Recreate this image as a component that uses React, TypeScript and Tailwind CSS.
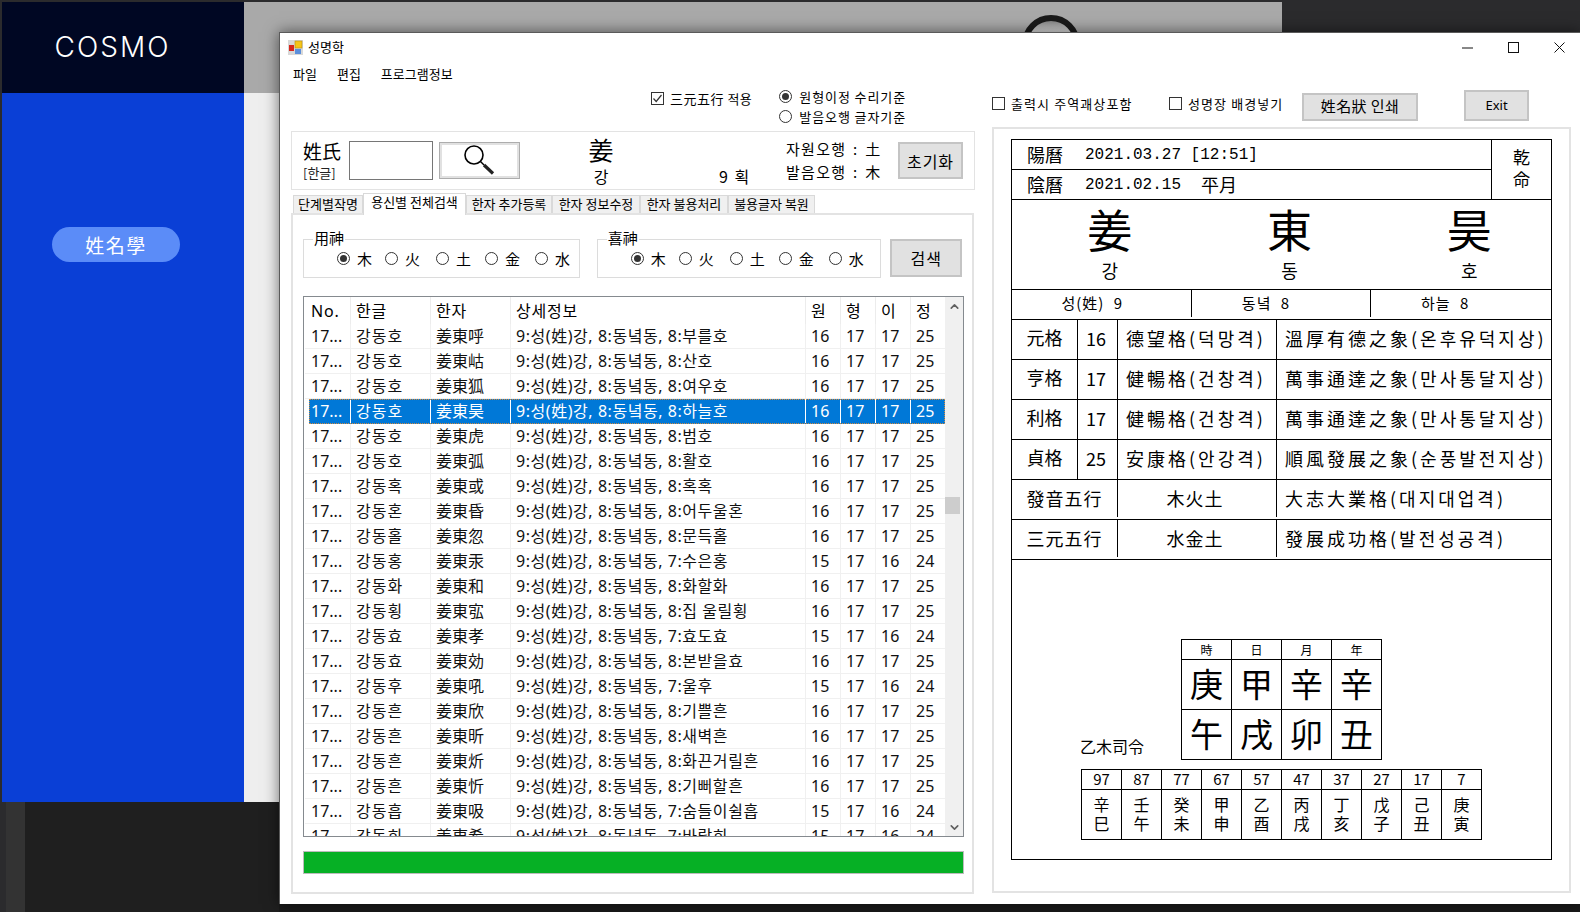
import { ChevronDown, ChevronUp } from "lucide-react";

const rows = [
  ["강동호", "姜東呼", "8:부를호", "16", "17", "17", "25"],
  ["강동호", "姜東岵", "8:산호", "16", "17", "17", "25"],
  ["강동호", "姜東狐", "8:여우호", "16", "17", "17", "25"],
  ["강동호", "姜東昊", "8:하늘호", "16", "17", "17", "25"],
  ["강동호", "姜東虎", "8:범호", "16", "17", "17", "25"],
  ["강동호", "姜東弧", "8:활호", "16", "17", "17", "25"],
  ["강동혹", "姜東或", "8:혹혹", "16", "17", "17", "25"],
  ["강동혼", "姜東昏", "8:어두울혼", "16", "17", "17", "25"],
  ["강동홀", "姜東忽", "8:문득홀", "16", "17", "17", "25"],
  ["강동홍", "姜東汞", "7:수은홍", "15", "17", "16", "24"],
  ["강동화", "姜東和", "8:화할화", "16", "17", "17", "25"],
  ["강동횡", "姜東宖", "8:집 울릴횡", "16", "17", "17", "25"],
  ["강동효", "姜東孝", "7:효도효", "15", "17", "16", "24"],
  ["강동효", "姜東効", "8:본받을효", "16", "17", "17", "25"],
  ["강동후", "姜東吼", "7:울후", "15", "17", "16", "24"],
  ["강동흔", "姜東欣", "8:기쁠흔", "16", "17", "17", "25"],
  ["강동흔", "姜東昕", "8:새벽흔", "16", "17", "17", "25"],
  ["강동흔", "姜東炘", "8:화끈거릴흔", "16", "17", "17", "25"],
  ["강동흔", "姜東忻", "8:기뻐할흔", "16", "17", "17", "25"],
  ["강동흡", "姜東吸", "7:숨들이쉴흡", "15", "17", "16", "24"],
  ["강동희", "姜東希", "7:바랄희", "15", "17", "16", "24"],
];

const tabs = [
  { label: "한자 추가등록", width: "w-[86px]" },
  { label: "한자 정보수정", width: "w-[88px]" },
  { label: "한자 불용처리", width: "w-[88px]" },
  { label: "불용글자 복원", width: "w-[87px]" },
];

const elements = [
  { label: "木", width: "w-[48px]" },
  { label: "火", width: "w-[51px]" },
  { label: "土", width: "w-[49px]" },
  { label: "金", width: "w-[50px]" },
  { label: "水", width: "w-[36px]" },
];

const fortune = [
  ["元格", "16", "德望格(덕망격)", "溫厚有德之象(온후유덕지상)"],
  ["亨格", "17", "健暢格(건창격)", "萬事通達之象(만사통달지상)"],
  ["利格", "17", "健暢格(건창격)", "萬事通達之象(만사통달지상)"],
  ["貞格", "25", "安康格(안강격)", "順風發展之象(순풍발전지상)"],
];

const daeun = [
  ["97", "辛", "巳"],
  ["87", "壬", "午"],
  ["77", "癸", "未"],
  ["67", "甲", "申"],
  ["57", "乙", "酉"],
  ["47", "丙", "戌"],
  ["37", "丁", "亥"],
  ["27", "戊", "子"],
  ["17", "己", "丑"],
  ["7", "庚", "寅"],
];

function Check({ checked, label }: { checked?: boolean; label: string }) {
  return (
    <div className="flex items-center gap-[6px] text-[13px] leading-none text-black">
      <span className="flex h-[13px] w-[13px] items-center justify-center border border-[#333]">
        {checked && (
          <svg width="11" height="11" viewBox="0 0 11 11" fill="none">
            <path d="M1.5 5.5 4.2 8.5 9.5 2" stroke="#333" strokeWidth="1.2" />
          </svg>
        )}
      </span>
      <span>{label}</span>
    </div>
  );
}

function Radio({ checked }: { checked?: boolean }) {
  return (
    <span className="flex h-[13px] w-[13px] shrink-0 items-center justify-center rounded-full border border-[#333]">
      {checked && <span className="h-[7px] w-[7px] rounded-full bg-[#333]" />}
    </span>
  );
}

function WinButton({ className, children }: { className: string; children: React.ReactNode }) {
  return (
    <button className={`flex items-center justify-center border-2 border-[#c4c4c4] bg-[#e1e1e1] text-black ${className}`}>
      {children}
    </button>
  );
}

function ElementGroup({ title, className }: { title: string; className: string }) {
  return (
    <div className={`relative flex h-[39px] items-center border border-[#dcdcdc] ${className}`}>
      <span className="absolute top-[-12px] left-[9px] bg-white px-[1px] text-[15px] leading-[20px]">{title}</span>
      {elements.map((el, i) => (
        <div key={el.label} className={`flex items-center gap-[7px] text-[15px] leading-none ${el.width}`}>
          <Radio checked={i === 0} />
          <span>{el.label}</span>
        </div>
      ))}
    </div>
  );
}

function ResultGrid() {
  const colClass = "grid grid-cols-[46px_80px_80px_295px_35px_35px_35px_35px]";
  return (
    <div className="flex h-[541px] w-[661px] overflow-hidden border border-[#858a8f] font-['Noto_Sans','Noto_Sans_CJK_KR',sans-serif] text-[16px] leading-none">
      <div className="w-[641px] shrink-0 pl-[1px]">
        <div className={`${colClass} h-[27px] items-center tracking-[0.8px]`}>
          {["No.", "한글", "한자", "상세정보", "원", "형", "이", "정"].map((h, j) => (
            <div key={h} className={`flex h-full items-center border-r border-[#ececec] ${j === 0 ? "pl-[6px]" : "pl-[5px]"}`}>
              {h}
            </div>
          ))}
        </div>
        {rows.map((r, i) => {
          const selected = i === 3;
          return (
            <div
              key={i}
              className={`grid h-[25px] ${
                selected
                  ? "ml-[4px] grid-cols-[42px_80px_80px_295px_35px_35px_35px_35px] bg-[#0078d7] pb-[1px] text-white outline outline-dotted -outline-offset-1 outline-[#d08a40]"
                  : `${colClass} border-b border-[#f0f0f0] text-[#111]`
              }`}>
              {["17...", r[0], r[1], `9:성(姓)강, 8:동녘동, ${r[2]}`, r[3], r[4], r[5], r[6]].map((cell, j) => (
                <div
                  key={j}
                  className={`flex h-full items-center whitespace-nowrap border-r ${
                    selected ? "border-white" : "border-[#f0f0f0]"
                  } ${j === 0 ? (selected ? "pl-[2px]" : "pl-[6px]") : "pl-[5px]"} ${
                    j === 1 ? "tracking-[1px]" : j === 3 ? "tracking-[0.55px]" : ""
                  }`}>
                  {cell}
                </div>
              ))}
            </div>
          );
        })}
      </div>
      <div className="flex h-full w-[18px] flex-col bg-[#f0f0f0] text-[#606060]">
        <div className="flex h-[18px] items-center justify-center">
          <ChevronUp size={13} strokeWidth={3} />
        </div>
        <div className="mt-[182px] h-[17px] w-[15px] bg-[#cdcdcd]" />
        <div className="flex-1" />
        <div className="flex h-[18px] items-center justify-center">
          <ChevronDown size={13} strokeWidth={3} />
        </div>
      </div>
    </div>
  );
}

function LeftColumn() {
  return (
    <div className="w-[684px] shrink-0">
      <div className="flex h-[47px] pt-[3px] pl-[360px]">
        <div className="pt-[5px] tracking-[0.5px]">
          <Check checked label="三元五行 적용" />
        </div>
        <div className="ml-[27px] flex flex-col gap-[7px] pt-[3px] text-[13px] leading-[13px] tracking-[0.9px]">
          <div className="flex items-center gap-[7px]">
            <Radio checked />
            <span>원형이정 수리기준</span>
          </div>
          <div className="flex items-center gap-[7px]">
            <Radio />
            <span>발음오행 글자기준</span>
          </div>
        </div>
      </div>

      <div className="flex h-[59px] items-center border border-[#e3e3e3] pl-[11px]">
        <div className="w-[46px]">
          <div className="text-[19px] leading-[24px]">姓氏</div>
          <div className="text-[13px] leading-[20px] text-[#222]">[한글]</div>
        </div>
        <div className="h-[39px] w-[84px] border border-[#767676] bg-white" />
        <div className="ml-[6px] flex h-[37px] w-[81px] items-center justify-center border border-[#adadad] bg-white shadow-[inset_0_0_0_2px_#e1e1e1]">
          <svg width="31" height="31" viewBox="0 0 31 31" fill="none">
            <circle cx="10" cy="10" r="9" stroke="#000" strokeWidth="1.6" />
            <path d="M16.5 16.5 20 20" stroke="#000" strokeWidth="1.4" />
            <path d="M20 20 29 28.5" stroke="#222" strokeWidth="3.2" />
          </svg>
        </div>
        <div className="ml-[60px] flex w-[42px] flex-col items-center pb-[1px]">
          <span className="text-[25px] leading-[30px]">姜</span>
          <span className="mt-[3px] text-[16px] leading-[19px]">강</span>
        </div>
        <div className="ml-[97px] w-[34px] self-end pb-[3px] text-[16px] leading-[20px] tracking-[1.5px] whitespace-nowrap">9 획</div>
        <div className="ml-[33px] w-[112px] pb-[2px] text-[15px] leading-[23px] tracking-[1.3px] [word-spacing:2px] whitespace-nowrap">
          <div>자원오행 : 土</div>
          <div>발음오행 : 木</div>
        </div>
        <WinButton className="h-[37px] w-[65px] text-[16px] tracking-[1px]">초기화</WinButton>
      </div>

      <div className="flex h-[23px] items-end pl-[2px] text-[13px] leading-none">
        <div className="flex h-[18px] w-[70px] items-center justify-center border border-b-0 border-[#d9d9d9] bg-[#f0f0f0] pb-[2px]">
          단계별작명
        </div>
        <div className="relative z-10 -mb-[2px] flex h-[22px] w-[103px] items-start justify-center border border-b-0 border-[#d9d9d9] bg-white pt-[1px]">
          용신별 전체검색
        </div>
        {tabs.map((t) => (
          <div
            key={t.label}
            className={`flex h-[18px] items-center justify-center border border-b-0 border-[#d9d9d9] bg-[#f0f0f0] pb-[2px] ${t.width}`}>
            {t.label}
          </div>
        ))}
      </div>

      <div className="h-[681px] w-[683px] border-2 border-[#e3e3e3] px-[10px]">
        <div className="mt-[24px] flex items-start">
          <ElementGroup title="用神" className="w-[278px] pl-[33px]" />
          <ElementGroup title="喜神" className="ml-[17px] w-[286px] pl-[33px]" />
          <WinButton className="ml-[9px] h-[38px] w-[72px] text-[16px] tracking-[1px]">검색</WinButton>
        </div>
        <div className="mt-[18px]">
          <ResultGrid />
        </div>
        <div className="mt-[14px] h-[23px] w-[661px] border border-[#bcbcbc] bg-[#06b025]" />
      </div>
    </div>
  );
}

function Saju() {
  const head = ["時", "日", "月", "年"];
  const stems = ["庚", "甲", "辛", "辛"];
  const branches = ["午", "戌", "卯", "丑"];
  return (
    <div className="pt-[79px]">
      <div className="flex pl-[68px]">
        <div className="w-[101px] self-end pb-[4px] text-[16px] leading-[20px]">乙木司令</div>
        <div className="grid w-[201px] grid-cols-4 border-t border-l border-black">
          {head.map((h) => (
            <div key={h} className="flex h-[20px] items-center justify-center border-r border-b border-black text-[12px] leading-none">
              {h}
            </div>
          ))}
          {[...stems, ...branches].map((c, i) => (
            <div key={i} className="flex h-[50px] items-center justify-center border-r border-b border-black pb-[3px] text-[33px] leading-none">
              {c}
            </div>
          ))}
        </div>
      </div>
      <div className="mt-[9px] ml-[69px] grid w-[401px] grid-cols-10 border-t border-l border-black">
        {daeun.map((d) => (
          <div key={d[0]} className="flex h-[20px] items-center justify-center border-r border-b border-black pb-[3px] text-[15px] leading-none">
            {d[0]}
          </div>
        ))}
        {daeun.map((d) => (
          <div key={d[0]} className="flex h-[50px] flex-col items-center justify-center border-r border-b border-black pb-[2px] text-[16px] leading-[19px]">
            <span>{d[1]}</span>
            <span>{d[2]}</span>
          </div>
        ))}
      </div>
    </div>
  );
}

function Paper() {
  return (
    <div className="h-[721px] w-[541px] border border-black text-black">
      <div className="flex h-[60px] border-b border-black">
        <div className="w-[480px] border-r border-black text-[18px]">
          <div className="flex h-[30px] items-center border-b border-black pl-[15px]">
            <span className="w-[58px]">陽曆</span>
            <span className="font-['Liberation_Mono',monospace] text-[16px]">2021.03.27 [12:51]</span>
          </div>
          <div className="flex h-[29px] items-center pl-[15px]">
            <span className="w-[58px]">陰曆</span>
            <span className="font-['Liberation_Mono',monospace] text-[16px]">2021.02.15</span>
            <span className="ml-[20px]">平月</span>
          </div>
        </div>
        <div className="flex flex-1 flex-col items-center justify-center pb-[3px] text-[17px] leading-[22px]">
          <span>乾</span>
          <span>命</span>
        </div>
      </div>

      <div className="grid h-[90px] grid-cols-3 border-b border-black">
        {[
          ["姜", "강"],
          ["東", "동"],
          ["昊", "호"],
        ].map(([han, kor]) => (
          <div key={han} className="flex flex-col items-center pl-[16px]">
            <span className="text-[45px] leading-[58px]">{han}</span>
            <span className="text-[18px] leading-[24px]">{kor}</span>
          </div>
        ))}
      </div>

      <div className="grid h-[30px] grid-cols-3 border-b border-black pb-[2px] text-[15px] tracking-[1px] [word-spacing:5px]">
        <div className="flex items-center justify-center border-r border-black pr-[18px]">성(姓) 9</div>
        <div className="flex items-center justify-center border-r border-black pr-[30px]">동녘 8</div>
        <div className="flex items-center justify-center pr-[32px]">하늘 8</div>
      </div>

      {fortune.map((f, i) => (
        <div key={i} className="grid h-[40px] grid-cols-[66px_40px_159px_1fr] border-b border-black text-[18px]">
          <div className="flex items-center justify-center border-r border-black pb-[5px]">{f[0]}</div>
          <div className="flex items-center justify-center border-r border-black pr-[3px] pb-[2px]">{f[1]}</div>
          <div className="flex items-center border-r border-black pb-[2px] pl-[8px] whitespace-nowrap tracking-[3px]">{f[2]}</div>
          <div className="flex items-center pb-[2px] pl-[8px] whitespace-nowrap tracking-[3px]">{f[3]}</div>
        </div>
      ))}
      {[
        ["發音五行", "木火土", "大志大業格(대지대업격)"],
        ["三元五行", "水金土", "發展成功格(발전성공격)"],
      ].map((f) => (
        <div key={f[0]} className="grid h-[40px] grid-cols-[106px_159px_1fr] border-b border-black pb-[2px] text-[18px]">
          <div className="flex items-center justify-center border-r border-black tracking-[1px]">{f[0]}</div>
          <div className="flex items-center justify-center border-r border-black pr-[4px] tracking-[1px]">{f[1]}</div>
          <div className="flex items-center pl-[8px] whitespace-nowrap tracking-[3px]">{f[2]}</div>
        </div>
      ))}
      <Saju />
    </div>
  );
}

function RightColumn() {
  return (
    <div className="w-[579px] shrink-0">
      <div className="flex h-[43px] items-center">
        <div className="-mt-[5px] w-[177px] tracking-[1.1px]">
          <Check label="출력시 주역괘상포함" />
        </div>
        <div className="-mt-[5px] w-[133px] tracking-[1.1px]">
          <Check label="성명장 배경넣기" />
        </div>
        <WinButton className="mt-[2px] h-[28px] w-[116px] text-[15px] tracking-[0.4px]">姓名狀 인쇄</WinButton>
        <WinButton className="ml-[46px] h-[31px] w-[65px] font-['Noto_Sans',sans-serif] text-[13px]">Exit</WinButton>
      </div>
      <div className="h-[766px] border-2 border-[#e3e3e3] pt-[10px] pl-[17px]">
        <Paper />
      </div>
    </div>
  );
}

function AppWindow() {
  return (
    <div className="absolute top-[32px] left-[279px] h-[872px] w-[1301px] border-t border-l border-[#5a5a5a] bg-white text-black shadow-[0_0_14px_rgba(0,0,0,0.55)]">
      <div className="flex h-[29px] items-center pl-[8px]">
        <svg width="15" height="15" viewBox="0 0 15 15">
          <rect width="15" height="15" fill="#d8d8d8" />
          <rect x="7" y="1" width="7" height="7" fill="#f5c518" stroke="#b98a10" strokeWidth="0.6" />
          <rect x="1" y="5" width="5" height="6" fill="#d8261c" />
          <rect x="7" y="9" width="6" height="5" fill="#5b8fdc" />
        </svg>
        <span className="ml-[5px] pb-[2px] text-[13px] leading-none">성명학</span>
        <div className="ml-auto flex items-center gap-[35px] pr-[15px]">
          <svg width="11" height="11" viewBox="0 0 11 11">
            <path d="M0 6h11" stroke="#111" strokeWidth="1" />
          </svg>
          <svg width="11" height="11" viewBox="0 0 11 11" fill="none">
            <rect x="0.5" y="0.5" width="10" height="10" stroke="#111" />
          </svg>
          <svg width="11" height="11" viewBox="0 0 11 11" fill="none">
            <path d="M0.5 0.5 10.5 10.5M10.5 0.5 0.5 10.5" stroke="#111" strokeWidth="1" />
          </svg>
        </div>
      </div>
      <div className="flex h-[22px] items-center gap-[20px] pl-[13px] text-[13px] leading-none">
        <span>파일</span>
        <span>편집</span>
        <span>프로그램정보</span>
      </div>
      <div className="flex gap-[17px] pl-[11px]">
        <LeftColumn />
        <RightColumn />
      </div>
    </div>
  );
}

export default function App() {
  return (
    <div className="relative flex h-[912px] w-[1580px] flex-col overflow-hidden bg-[#2b2b2d] font-['Noto_Sans_CJK_KR',sans-serif]">
      <div className="h-[2px] shrink-0" />
      <div className="flex h-[800px] shrink-0">
        <div className="w-[2px]" />
        <aside className="flex w-[242px] flex-col bg-[#0a3fd6]">
          <div className="flex h-[91px] items-center justify-center bg-[#000723] pr-[21px] pb-[2px]">
            <span className="font-['Inter',sans-serif] text-[28px] leading-none font-light tracking-[2px] text-white">COSMO</span>
          </div>
          <div className="mt-[134px] ml-[50px] flex h-[35px] w-[128px] items-center justify-center rounded-full bg-[#5b8cf8] text-[19px] leading-none tracking-[1.5px] text-white">
            姓名學
          </div>
        </aside>
        <div className="flex w-[1038px] flex-col bg-[#eeeeee]">
          <div className="h-[91px] overflow-hidden bg-[#a9a9a9] pt-[13px] pl-[778px]">
            <svg width="58" height="58" viewBox="0 0 58 58">
              <defs>
                <linearGradient id="ball" x1="0" y1="0" x2="0" y2="1">
                  <stop offset="0" stopColor="#6a6a6a" />
                  <stop offset="0.25" stopColor="#d8d8d8" />
                </linearGradient>
              </defs>
              <circle cx="29" cy="29" r="26" fill="url(#ball)" stroke="#1a1a1a" strokeWidth="6" />
            </svg>
          </div>
        </div>
      </div>
      <div className="flex flex-1">
        <div className="w-[6px] bg-[#2b2b2d]" />
        <div className="w-[19px] bg-[#333333]" />
        <div className="flex-1 bg-[#1f1f1f]" />
      </div>
      <div className="absolute bottom-0 left-[279px] h-[8px] w-[1301px] bg-[#1a1a1a]" />
      <AppWindow />
    </div>
  );
}
